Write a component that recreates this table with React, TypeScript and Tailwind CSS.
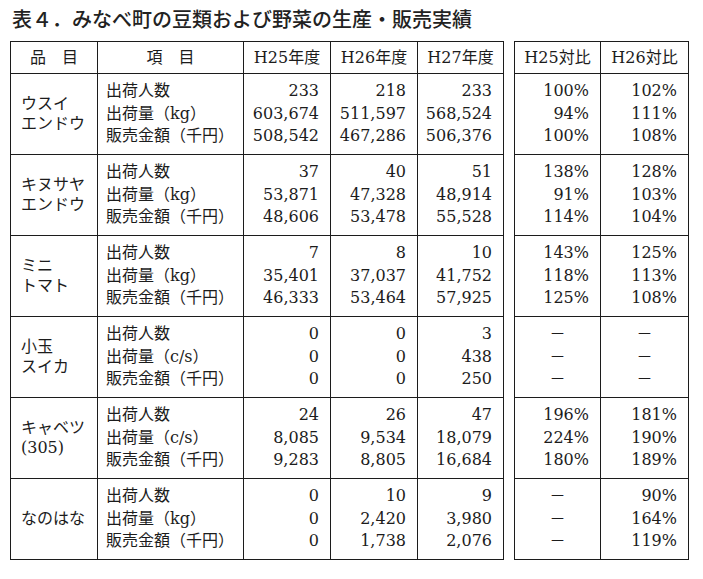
import React from "react"

type Group = {
  name: string[]
  unit: string
  years: string[][]
  ratio: string[][]
}

const groups: Group[] = [
  {
    name: ["ウスイ", "エンドウ"],
    unit: "（kg）",
    years: [
      ["233", "218", "233"],
      ["603,674", "511,597", "568,524"],
      ["508,542", "467,286", "506,376"],
    ],
    ratio: [
      ["100%", "102%"],
      ["94%", "111%"],
      ["100%", "108%"],
    ],
  },
  {
    name: ["キヌサヤ", "エンドウ"],
    unit: "（kg）",
    years: [
      ["37", "40", "51"],
      ["53,871", "47,328", "48,914"],
      ["48,606", "53,478", "55,528"],
    ],
    ratio: [
      ["138%", "128%"],
      ["91%", "103%"],
      ["114%", "104%"],
    ],
  },
  {
    name: ["ミニ", "トマト"],
    unit: "（kg）",
    years: [
      ["7", "8", "10"],
      ["35,401", "37,037", "41,752"],
      ["46,333", "53,464", "57,925"],
    ],
    ratio: [
      ["143%", "125%"],
      ["118%", "113%"],
      ["125%", "108%"],
    ],
  },
  {
    name: ["小玉", "スイカ"],
    unit: "（c/s）",
    years: [
      ["0", "0", "3"],
      ["0", "0", "438"],
      ["0", "0", "250"],
    ],
    ratio: [
      ["－", "－"],
      ["－", "－"],
      ["－", "－"],
    ],
  },
  {
    name: ["キャベツ", "(305)"],
    unit: "（c/s）",
    years: [
      ["24", "26", "47"],
      ["8,085", "9,534", "18,079"],
      ["9,283", "8,805", "16,684"],
    ],
    ratio: [
      ["196%", "181%"],
      ["224%", "190%"],
      ["180%", "189%"],
    ],
  },
  {
    name: ["なのはな"],
    unit: "（kg）",
    years: [
      ["0", "10", "9"],
      ["0", "2,420", "3,980"],
      ["0", "1,738", "2,076"],
    ],
    ratio: [
      ["－", "90%"],
      ["－", "164%"],
      ["－", "119%"],
    ],
  },
]

const cell = "border border-[#1c1c1c] p-0 align-middle"

function Lines({ values }: { values: string[] }) {
  return (
    <div className="leading-[22.67px]">
      {values.map((v, i) => (
        <div key={i} className={v === "－" ? "text-center" : "text-right pr-[11px]"}>
          {v}
        </div>
      ))}
    </div>
  )
}

export default function App() {
  return (
    <div
      className="w-[703px] h-[579px] bg-white pl-[10px] pt-[7px] text-[#1c1c1c]"
      style={{ fontFamily: '"DejaVu Serif", "Noto Sans CJK JP", serif' }}
    >
      <h1
        className="pl-[2px] text-[20px] leading-[24px] font-medium text-[#222]"
        style={{ fontFamily: '"Noto Sans CJK JP", "Noto Sans", sans-serif' }}
      >
        表４．みなべ町の豆類および野菜の生産・販売実績
      </h1>

      <div className="mt-[10px] flex gap-[10px] text-[16px]">
        <table className="table-fixed border-collapse">
          <colgroup>
            <col className="w-[87px]" />
            <col className="w-[146px]" />
            <col className="w-[87px]" />
            <col className="w-[87px]" />
            <col className="w-[86px]" />
          </colgroup>
          <thead>
            <tr className="h-[32px]">
              <th className={`${cell} font-normal text-center`}>品　目</th>
              <th className={`${cell} font-normal text-center`}>項　目</th>
              <th className={`${cell} font-normal text-center`}>H25年度</th>
              <th className={`${cell} font-normal text-center`}>H26年度</th>
              <th className={`${cell} font-normal text-center`}>H27年度</th>
            </tr>
          </thead>
          <tbody>
            {groups.map((g) => (
              <tr key={g.name.join("")} className="h-[81px]">
                <td className={`${cell} pl-[10px] leading-[20px]`}>
                  {g.name.map((n) => (
                    <div key={n}>{n}</div>
                  ))}
                </td>
                <td className={`${cell} pl-[8px] leading-[22.67px]`}>
                  <div>出荷人数</div>
                  <div>出荷量{g.unit}</div>
                  <div>販売金額（千円）</div>
                </td>
                {[0, 1, 2].map((c) => (
                  <td key={c} className={cell}>
                    <Lines values={g.years.map((r) => r[c])} />
                  </td>
                ))}
              </tr>
            ))}
          </tbody>
        </table>

        <table className="table-fixed border-collapse">
          <colgroup>
            <col className="w-[86px]" />
            <col className="w-[88px]" />
          </colgroup>
          <thead>
            <tr className="h-[32px]">
              <th className={`${cell} font-normal text-center`}>H25対比</th>
              <th className={`${cell} font-normal text-center`}>H26対比</th>
            </tr>
          </thead>
          <tbody>
            {groups.map((g) => (
              <tr key={g.name.join("")} className="h-[81px]">
                {[0, 1].map((c) => (
                  <td key={c} className={cell}>
                    <Lines values={g.ratio.map((r) => r[c])} />
                  </td>
                ))}
              </tr>
            ))}
          </tbody>
        </table>
      </div>
    </div>
  )
}
